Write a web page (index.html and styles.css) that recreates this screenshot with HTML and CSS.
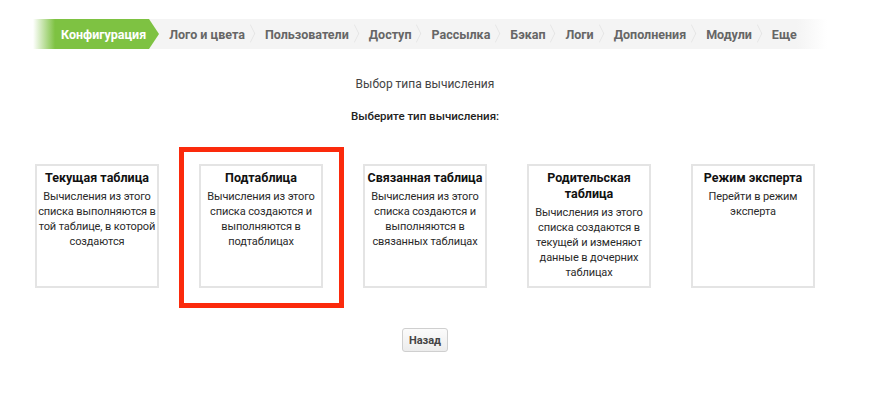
FILE: index.html
```html
<!DOCTYPE html>
<html lang="ru">
<head>
    <meta charset="UTF-8">
    <title>Выбор типа вычисления</title>
    <link rel="stylesheet" href="styles.css">
</head>
<body>
    <div class="page">
        <!-- вкладки -->
        <div class="tabs">
            <div class="tab active">Конфигурация</div>
            <div class="tab">Лого и цвета</div>
            <div class="tab">Пользователи</div>
            <div class="tab">Доступ</div>
            <div class="tab">Рассылка</div>
            <div class="tab">Бэкап</div>
            <div class="tab">Логи</div>
            <div class="tab">Дополнения</div>
            <div class="tab">Модули</div>
            <div class="tab last">Еще</div>
        </div>

        <h1 class="title">Выбор типа вычисления</h1>
        <p class="subtitle">Выберите тип вычисления:</p>

        <div class="types">
            <div class="type">
                <div class="type-name">Текущая таблица</div>
                <div class="type-desc">Вычисления из этого списка выполняются в той таблице, в которой создаются</div>
            </div>
            <div class="type marked">
                <div class="type-name">Подтаблица</div>
                <div class="type-desc">Вычисления из этого списка создаются и выполняются в подтаблицах</div>
            </div>
            <div class="type">
                <div class="type-name">Связанная таблица</div>
                <div class="type-desc">Вычисления из этого списка создаются и выполняются в связанных таблицах</div>
            </div>
            <div class="type">
                <div class="type-name">Родительская таблица</div>
                <div class="type-desc">Вычисления из этого списка создаются в текущей и изменяют данные в дочерних таблицах</div>
            </div>
            <div class="type">
                <div class="type-name">Режим эксперта</div>
                <div class="type-desc">Перейти в режим эксперта</div>
            </div>
        </div>

        <div class="actions">
            <button class="btn">Назад</button>
        </div>
    </div>
</body>
</html>
```

FILE: styles.css
```css
body {
    margin: 0;
    background: #fff;
    color: #222;
    font-family: Roboto, 'Open Sans', sans-serif;
}

.page {
    width: 850px;
    padding-top: 19px;
}

/* вкладки */
.tabs {
    display: inline-flex;
    margin-left: 33px;
    height: 30px;
    background: linear-gradient(to right, #f4f4f4 calc(100% - 30px), #fff);
}

.tab {
    position: relative;
    display: flex;
    align-items: center;
    padding: 0 10px;
    font-size: 12.5px;
    font-weight: bold;
    color: #666;
    white-space: nowrap;
}

.tab::after {
    content: '';
    position: absolute;
    right: -2px;
    top: 8px;
    width: 12px;
    height: 12px;
    border-top: 1px solid #e2e2e2;
    border-right: 1px solid #e2e2e2;
    transform: scaleX(0.5) rotate(45deg);
}

.tab.last {
    padding-right: 30px;
}

.tab.last::after {
    display: none;
}

.tab.active {
    padding: 0 3px 0 28px;
    margin-right: 10px;
    color: #fff;
    background: linear-gradient(to right, #fff, #7ec242 22px);
}

.tab.active::after {
    right: -10px;
    top: 0;
    width: 0;
    height: 0;
    border-style: solid;
    border-width: 15px 0 15px 10px;
    border-color: transparent transparent transparent #7ec242;
    transform: none;
}

.title {
    margin: 26px 0 0;
    text-align: center;
    font-size: 12px;
    font-weight: normal;
    line-height: 18px;
    color: #444;
}

.subtitle {
    margin: 14px 0 0;
    text-align: center;
    font-size: 11.5px;
    font-weight: 500;
    line-height: 18px;
    color: #222;
}

.types {
    display: flex;
    justify-content: center;
    gap: 40px;
    margin-top: 39px;
}

.type {
    position: relative;
    box-sizing: border-box;
    width: 124px;
    height: 124px;
    padding: 4px 0;
    border: 2px solid #e4e4e4;
    text-align: center;
}

.type-name {
    font-size: 12.5px;
    font-weight: bold;
    line-height: 16px;
    color: #111;
    margin-bottom: 3px;
}

.type-desc {
    font-size: 11px;
    line-height: 15px;
    color: #2a2a2a;
    letter-spacing: -0.1px;
}

.type.marked::before {
    content: '';
    position: absolute;
    top: -19px;
    left: -22px;
    right: -23px;
    bottom: -22px;
    border: 5px solid #fb2a0c;
}

.actions {
    margin-top: 40px;
    text-align: center;
}

.btn {
    width: 46px;
    height: 24px;
    padding: 0;
    font-family: inherit;
    font-size: 11px;
    font-weight: bold;
    color: #444;
    background: linear-gradient(#fbfbfb, #ececec);
    border: 1px solid #cfcfcf;
    border-radius: 3px;
}
```
